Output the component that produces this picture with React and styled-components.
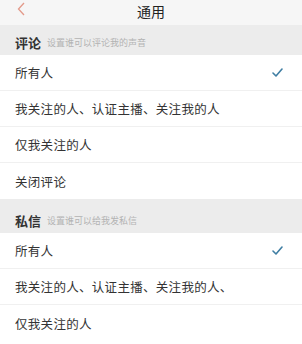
import React from "react";
import styled, { createGlobalStyle } from "styled-components";

const GlobalStyle = createGlobalStyle`
  html, body {
    margin: 0;
    padding: 0;
    background: #ffffff;
    font-family: "Noto Sans CJK SC", "Noto Sans", sans-serif;
  }
`;

const Page = styled.div`
  width: 302px;
  height: 344px;
  overflow: hidden;
  background: #ffffff;
`;

const Header = styled.div`
  height: 25px;
  display: grid;
  grid-template-columns: 40px 1fr 40px;
  align-items: center;
  background: #f6f6f6;
`;

const Back = styled.div`
  display: flex;
  align-items: center;
  padding-left: 17px;
  margin-top: -7px;
`;

const Title = styled.div`
  text-align: center;
  font-size: 14px;
  color: #222;
  line-height: 1;
  margin-top: -3px;
`;

const SectionHead = styled.div`
  height: ${(p) => p.h}px;
  box-sizing: border-box;
  padding: ${(p) => p.pt}px 15px 0;
  display: flex;
  align-items: center;
  gap: 6px;
  background: #ececec;
`;

const SectionName = styled.span`
  font-size: 13px;
  font-weight: 700;
  color: #333;
  line-height: 16px;
`;

const SectionHint = styled.span`
  font-size: 9px;
  color: #b3b3b3;
  line-height: 16px;
`;

const Row = styled.div`
  height: 36px;
  box-sizing: border-box;
  padding: 0 15px;
  display: flex;
  align-items: center;
  justify-content: space-between;
  border-bottom: ${(p) => (p.last ? "none" : "1px solid #f0f0f0")};
`;

const RowText = styled.span`
  font-size: 12.5px;
  color: #333;
  letter-spacing: 0.3px;
`;

const Check = () => (
  <svg width="11" height="9" viewBox="0 0 11 9" style={{ marginRight: 4 }}>
    <path d="M1 5 L4 8 L10 1" fill="none" stroke="#3f7ea3" strokeWidth="1.6" strokeLinecap="round" strokeLinejoin="round" />
  </svg>
);

const sections = [
  {
    name: "评论",
    hint: "设置谁可以评论我的声音",
    h: 30,
    pt: 6,
    items: ["所有人", "我关注的人、认证主播、关注我的人", "仅我关注的人", "关闭评论"],
  },
  {
    name: "私信",
    hint: "设置谁可以给我发私信",
    h: 34,
    pt: 10,
    items: ["所有人", "我关注的人、认证主播、关注我的人、", "仅我关注的人"],
  },
];

export default function App() {
  return (
    <Page>
      <GlobalStyle />
      <Header>
        <Back>
          <svg width="8" height="14" viewBox="0 0 8 14">
            <path d="M7 1 L1.5 7 L7 13" fill="none" stroke="#e39a8a" strokeWidth="1.3" />
          </svg>
        </Back>
        <Title>通用</Title>
        <div />
      </Header>
      {sections.map((s) => (
        <div key={s.name}>
          <SectionHead h={s.h} pt={s.pt}>
            <SectionName>{s.name}</SectionName>
            <SectionHint>{s.hint}</SectionHint>
          </SectionHead>
          {s.items.map((it, i) => (
            <Row key={it} last={i === s.items.length - 1}>
              <RowText>{it}</RowText>
              {i === 0 && <Check />}
            </Row>
          ))}
        </div>
      ))}
    </Page>
  );
}
